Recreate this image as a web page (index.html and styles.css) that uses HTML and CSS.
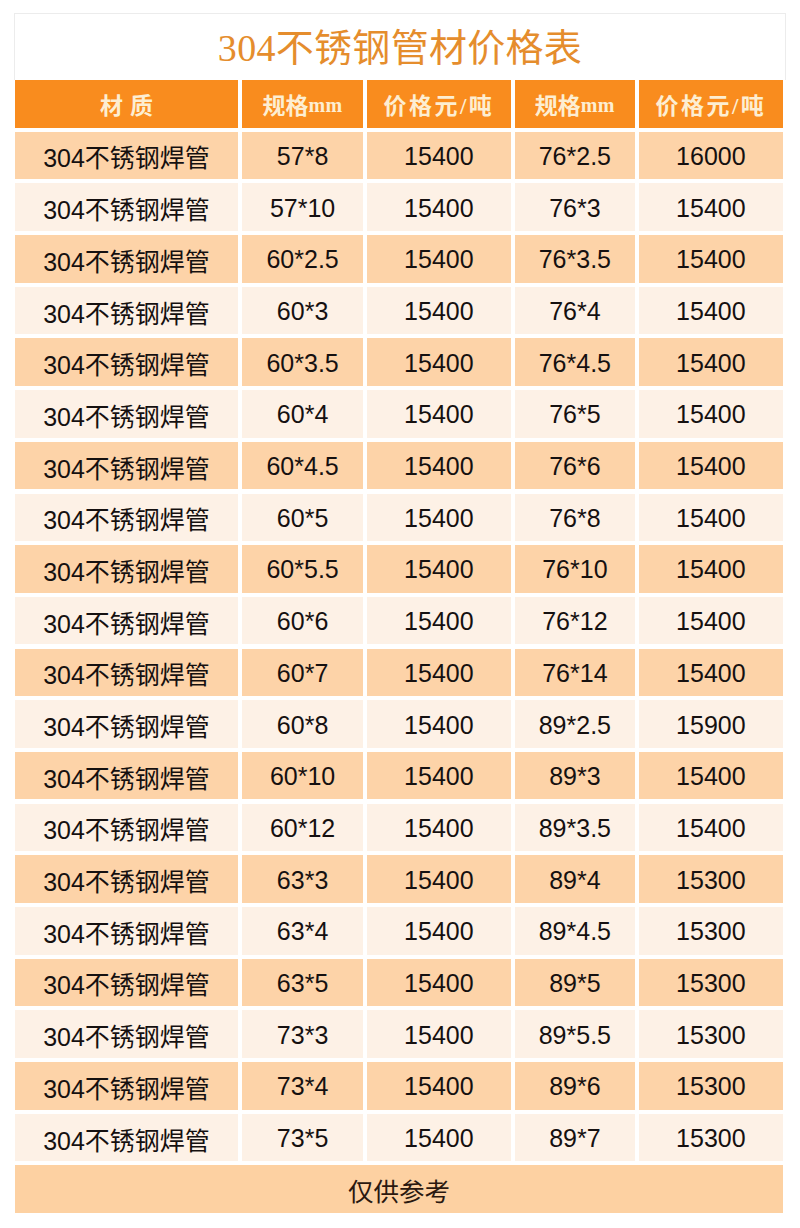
FILE: index.html
```html
<!DOCTYPE html>
<html lang="zh-CN">
<head>
<meta charset="utf-8">
<title>304不锈钢管材价格表</title>
<link rel="stylesheet" href="styles.css">
</head>
<body>
<div class="page">
  <div class="title-box"><h1 class="title">304不锈钢管材价格表</h1></div>
  <div class="table">
    <div class="row head">
      <div class="cell sp">材质</div>
      <div class="cell">规格<span class="unit">mm</span></div>
      <div class="cell sp2">价格元/吨</div>
      <div class="cell">规格<span class="unit">mm</span></div>
      <div class="cell sp2">价格元/吨</div>
    </div>
    <div class="row odd"><div class="cell">304不锈钢焊管</div><div class="cell">57*8</div><div class="cell">15400</div><div class="cell">76*2.5</div><div class="cell">16000</div></div>
    <div class="row even"><div class="cell">304不锈钢焊管</div><div class="cell">57*10</div><div class="cell">15400</div><div class="cell">76*3</div><div class="cell">15400</div></div>
    <div class="row odd"><div class="cell">304不锈钢焊管</div><div class="cell">60*2.5</div><div class="cell">15400</div><div class="cell">76*3.5</div><div class="cell">15400</div></div>
    <div class="row even"><div class="cell">304不锈钢焊管</div><div class="cell">60*3</div><div class="cell">15400</div><div class="cell">76*4</div><div class="cell">15400</div></div>
    <div class="row odd"><div class="cell">304不锈钢焊管</div><div class="cell">60*3.5</div><div class="cell">15400</div><div class="cell">76*4.5</div><div class="cell">15400</div></div>
    <div class="row even"><div class="cell">304不锈钢焊管</div><div class="cell">60*4</div><div class="cell">15400</div><div class="cell">76*5</div><div class="cell">15400</div></div>
    <div class="row odd"><div class="cell">304不锈钢焊管</div><div class="cell">60*4.5</div><div class="cell">15400</div><div class="cell">76*6</div><div class="cell">15400</div></div>
    <div class="row even"><div class="cell">304不锈钢焊管</div><div class="cell">60*5</div><div class="cell">15400</div><div class="cell">76*8</div><div class="cell">15400</div></div>
    <div class="row odd"><div class="cell">304不锈钢焊管</div><div class="cell">60*5.5</div><div class="cell">15400</div><div class="cell">76*10</div><div class="cell">15400</div></div>
    <div class="row even"><div class="cell">304不锈钢焊管</div><div class="cell">60*6</div><div class="cell">15400</div><div class="cell">76*12</div><div class="cell">15400</div></div>
    <div class="row odd"><div class="cell">304不锈钢焊管</div><div class="cell">60*7</div><div class="cell">15400</div><div class="cell">76*14</div><div class="cell">15400</div></div>
    <div class="row even"><div class="cell">304不锈钢焊管</div><div class="cell">60*8</div><div class="cell">15400</div><div class="cell">89*2.5</div><div class="cell">15900</div></div>
    <div class="row odd"><div class="cell">304不锈钢焊管</div><div class="cell">60*10</div><div class="cell">15400</div><div class="cell">89*3</div><div class="cell">15400</div></div>
    <div class="row even"><div class="cell">304不锈钢焊管</div><div class="cell">60*12</div><div class="cell">15400</div><div class="cell">89*3.5</div><div class="cell">15400</div></div>
    <div class="row odd"><div class="cell">304不锈钢焊管</div><div class="cell">63*3</div><div class="cell">15400</div><div class="cell">89*4</div><div class="cell">15300</div></div>
    <div class="row even"><div class="cell">304不锈钢焊管</div><div class="cell">63*4</div><div class="cell">15400</div><div class="cell">89*4.5</div><div class="cell">15300</div></div>
    <div class="row odd"><div class="cell">304不锈钢焊管</div><div class="cell">63*5</div><div class="cell">15400</div><div class="cell">89*5</div><div class="cell">15300</div></div>
    <div class="row even"><div class="cell">304不锈钢焊管</div><div class="cell">73*3</div><div class="cell">15400</div><div class="cell">89*5.5</div><div class="cell">15300</div></div>
    <div class="row odd"><div class="cell">304不锈钢焊管</div><div class="cell">73*4</div><div class="cell">15400</div><div class="cell">89*6</div><div class="cell">15300</div></div>
    <div class="row even"><div class="cell">304不锈钢焊管</div><div class="cell">73*5</div><div class="cell">15400</div><div class="cell">89*7</div><div class="cell">15300</div></div>
    <div class="footer">仅供参考</div>
  </div>
</div>
</body>
</html>
```
FILE: styles.css
```css
html, body {
  margin: 0;
  padding: 0;
  background: #ffffff;
}
.page {
  padding-top: 13px;
  width: 800px;
}
.title-box {
  margin-left: 14px;
  width: 770px;
  height: 66px;
  border: 1px solid #ececec;
  border-bottom: none;
  display: flex;
  align-items: center;
  justify-content: center;
  background: #fff;
}
.title {
  margin: 0;
  font-family: "Liberation Serif", "Noto Sans CJK SC", serif;
  font-weight: 400;
  font-size: 38px;
  letter-spacing: 0.3px;
  color: #e58d2d;
  line-height: 1;
  padding-top: 2px;
}
.table {
  margin-left: 15px;
  width: 768px;
  display: flex;
  flex-direction: column;
  gap: 4.2px;
}
.row {
  display: grid;
  grid-template-columns: 223px 120.6px 143.4px 120px 143.4px;
  column-gap: 4.3px;
  height: 47.5px;
}
.cell {
  display: flex;
  align-items: center;
  justify-content: center;
  font-family: "Liberation Sans", "Noto Sans CJK SC", sans-serif;
  font-size: 25px;
  color: #151010;
  padding-top: 2px;
}
.odd .cell {
  background: #fdd3a8;
}
.even .cell {
  background: #fdf1e6;
}
.head .cell {
  background: #f98c1e;
  color: #fdeed2;
  font-family: "Liberation Serif", "Noto Sans CJK SC", serif;
  font-weight: 700;
  font-size: 23px;
  padding-top: 0;
}
.head .sp {
  letter-spacing: 7px;
  padding-left: 7px;
}
.head .sp2 {
  letter-spacing: 2.5px;
}
.unit {
  font-size: 20px;
  letter-spacing: 0.5px;
  padding-top: 4px;
}
.footer {
  height: 47.5px;
  background: #fdd1a2;
  display: flex;
  align-items: center;
  justify-content: center;
  font-family: "Liberation Sans", "Noto Sans CJK SC", sans-serif;
  font-size: 25.5px;
  color: #2a1810;
  padding-top: 1px;
  box-sizing: border-box;
}
```
